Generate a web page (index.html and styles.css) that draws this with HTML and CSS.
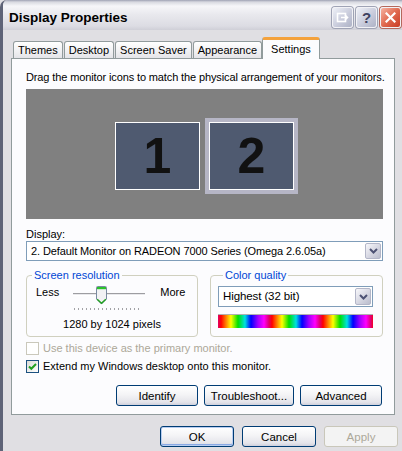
FILE: index.html
```html
<!DOCTYPE html>
<html>
<head>
<meta charset="utf-8">
<link rel="stylesheet" href="styles.css">
</head>
<body>
<div class="window">
  <div class="titlebar">
    <span class="title">Display Properties</span>
    <div class="tbtns">
      <div class="tbtn">
        <svg width="13" height="11" viewBox="0 0 13 11">
          <rect x="1.5" y="1.5" width="8" height="8" fill="none" stroke="#ffffff" stroke-width="1.6"/>
          <path d="M5 5.5 H11.5 M9 3 L11.5 5.5 L9 8" fill="none" stroke="#ffffff" stroke-width="1.6"/>
        </svg>
      </div>
      <div class="tbtn help">?</div>
      <div class="tbtn close">
        <svg width="11" height="11" viewBox="0 0 11 11">
          <path d="M1.5 1.5 L9.5 9.5 M9.5 1.5 L1.5 9.5" stroke="#ffffff" stroke-width="2.2" stroke-linecap="square"/>
        </svg>
      </div>
    </div>
  </div>
  <div class="client">
    <div class="tabs">
      <div class="tab">Themes</div>
      <div class="tab">Desktop</div>
      <div class="tab">Screen Saver</div>
      <div class="tab">Appearance</div>
      <div class="tab active">Settings</div>
    </div>
    <div class="panel">
      <div class="intro">Drag the monitor icons to match the physical arrangement of your monitors.</div>
      <div class="monitors">
        <div class="monitor"><div class="screen">1</div></div>
        <div class="monitor selected"><div class="screen">2</div></div>
      </div>
      <div class="label">Display:</div>
      <div class="select">
        <div class="val">2. Default Monitor on RADEON 7000 Series (Omega 2.6.05a)</div>
        <div class="arrow"><svg width="9" height="6" viewBox="0 0 9 6"><path d="M1 1 L4.5 4.5 L8 1" fill="none" stroke="#4d5274" stroke-width="2"/></svg></div>
      </div>
      <div class="groups">
        <fieldset class="group res">
          <legend>Screen resolution</legend>
          <div class="slider-row">
            <span class="less">Less</span>
            <div class="slider">
              <div class="track"></div>
              <div class="thumb">
                <svg width="11" height="19" viewBox="0 0 11 19">
                  <path d="M0.5 1.5 Q0.5 0.5 1.5 0.5 H9.5 Q10.5 0.5 10.5 1.5 V13 L5.5 18 L0.5 13 Z" fill="#f2f2f4" stroke="#7a8aa0"/>
                  <rect x="1" y="1" width="9" height="2.2" fill="#2cc22c"/>
                  <path d="M1.2 13.2 L5.5 17.2 L9.8 13.2" fill="none" stroke="#21a121" stroke-width="1.4"/>
                </svg>
              </div>
              <div class="ticks"></div>
            </div>
            <span class="more">More</span>
          </div>
          <div class="resval">1280 by 1024 pixels</div>
        </fieldset>
        <fieldset class="group color">
          <legend>Color quality</legend>
          <div class="select small">
            <div class="val">Highest (32 bit)</div>
            <div class="arrow"><svg width="9" height="6" viewBox="0 0 9 6"><path d="M1 1 L4.5 4.5 L8 1" fill="none" stroke="#4d5274" stroke-width="2"/></svg></div>
          </div>
          <div class="spectrum"></div>
        </fieldset>
      </div>
      <div class="checkrow disabled"><span class="check"></span><span>Use this device as the primary monitor.</span></div>
      <div class="checkrow"><span class="check on"><svg width="11" height="11" viewBox="0 0 11 11"><path d="M2 5.5 L4.3 7.8 L9 3" fill="none" stroke="#21a121" stroke-width="2"/></svg></span><span>Extend my Windows desktop onto this monitor.</span></div>
      <div class="panel-buttons">
        <button class="btn w82">Identify</button>
        <button class="btn w90">Troubleshoot...</button>
        <button class="btn w82">Advanced</button>
      </div>
    </div>
    <div class="footer">
      <button class="btn w74 default">OK</button>
      <button class="btn w74">Cancel</button>
      <button class="btn w74" disabled>Apply</button>
    </div>
  </div>
</div>
</body>
</html>
```

FILE: styles.css
```css
html, body {
  margin: 0;
  padding: 0;
}
body {
  width: 402px;
  height: 451px;
  overflow: hidden;
  font-family: "Liberation Sans", Arial, sans-serif;
  font-size: 11px;
  color: #000;
  background: #e0dfe3;
}
.window {
  height: 451px;
  box-sizing: border-box;
  border-left: 3px solid #5e6377;
  border-top-left-radius: 7px;
  background: #e0dfe3;
  display: flex;
  flex-direction: column;
}
.titlebar {
  height: 30px;
  flex: none;
  display: flex;
  background: linear-gradient(#9ea2b3 0, #d8d9e0 2px, #f6f6f9 6px, #e8e8ed 15px, #dcdce3 26px, #cfcfd7 30px);
  border-top-left-radius: 5px;
}
.title {
  flex: 1;
  padding: 10px 0 0 6px;
  font-weight: bold;
  font-size: 13.5px;
  line-height: 16px;
  color: #000;
}
.tbtns {
  display: flex;
  gap: 3px;
  margin: 7px 1px 0 0;
  align-self: flex-start;
}
.tbtn {
  width: 21px;
  height: 21px;
  box-sizing: border-box;
  border: 1px solid #f2f2f6;
  border-radius: 3px;
  box-shadow: 0 0 0 1px #9fa3b5;
  background: linear-gradient(135deg, #eef0f7 0%, #c9ccdc 55%, #aeb2c6 100%);
  display: flex;
  align-items: center;
  justify-content: center;
}
.tbtn.help {
  font-weight: bold;
  font-size: 15px;
  color: #3e4260;
  line-height: 19px;
}
.tbtn.close {
  background: linear-gradient(135deg, #f6b3a2 0%, #e06a50 50%, #c93b25 100%);
  box-shadow: 0 0 0 1px #b4685c;
}
.client {
  flex: 1;
  padding: 7px 0 0 8px;
  display: flex;
  flex-direction: column;
}
.tabs {
  display: flex;
  align-items: flex-end;
  gap: 1px;
  height: 21px;
  padding-left: 2px;
  position: relative;
  z-index: 1;
}
.tab {
  height: 17px;
  box-sizing: border-box;
  padding: 2px 4px 0;
  border: 1px solid #919b9c;
  border-bottom: none;
  border-radius: 3px 3px 0 0;
  background: linear-gradient(#ffffff, #f0f0f2 60%, #e4e4e8);
  line-height: 13px;
}
.tab.active {
  height: 22px;
  margin: 0 -2px -1px -1px;
  padding: 3px 8px 0;
  border-top: 3px solid #f4a23c;
  background: #fcfcfe;
  line-height: 13px;
}
.panel {
  width: 384px;
  box-sizing: border-box;
  border: 1px solid #919b9c;
  background: #fcfcfe;
  padding: 12px 11px 8px 14px;
}
.intro {
  line-height: 13px;
  white-space: nowrap;
  letter-spacing: -0.12px;
}
.monitors {
  margin-top: 5px;
  height: 130px;
  box-sizing: border-box;
  padding-top: 4px;
  background: #808080;
  display: flex;
  align-items: center;
  justify-content: center;
  gap: 1px;
}
.monitor {
  width: 93px;
  height: 76px;
  box-sizing: border-box;
  border: 4px solid transparent;
  display: flex;
}
.monitor.selected {
  border-color: #b6b6c6;
}
.screen {
  flex: 1;
  border: 1px solid #ffffff;
  background: #4f5a70;
  display: flex;
  align-items: center;
  justify-content: center;
  font-weight: bold;
  font-size: 50px;
  color: #111111;
}
.label {
  margin-top: 9px;
  line-height: 13px;
}
.select {
  height: 20px;
  box-sizing: border-box;
  border: 1px solid #7f9db9;
  background: #ffffff;
  padding: 1px;
  display: flex;
}
.select .val {
  flex: 1;
  padding-left: 3px;
  line-height: 16px;
  white-space: nowrap;
  font-size: 11px;
  letter-spacing: -0.1px;
}
.arrow {
  width: 16px;
  box-sizing: border-box;
  border: 1px solid #b3b6c8;
  border-radius: 2px;
  background: linear-gradient(135deg, #f8f8fb, #d2d3df 60%, #babdcd);
  display: flex;
  align-items: center;
  justify-content: center;
}
.groups {
  margin-top: 8px;
  display: flex;
  gap: 12px;
}
.group {
  margin: 0;
  padding: 0;
  border: 1px solid #d0d0bf;
  border-radius: 4px;
  min-width: 0;
}
.group legend {
  color: #0046d5;
  padding: 0 2px;
  margin-left: 5px;
  line-height: 13px;
}
.group.res {
  width: 172px;
  box-sizing: border-box;
  padding: 4px 0 5px;
}
.group.color {
  width: 173px;
  box-sizing: border-box;
  padding: 4px 9px 0 7px;
}
.slider-row {
  display: flex;
  height: 26px;
  padding-left: 9px;
}
.less, .more {
  line-height: 13px;
}
.slider {
  position: relative;
  width: 72px;
  height: 26px;
  margin-left: 14px;
}
.more {
  margin-left: 15px;
}
.track {
  position: absolute;
  left: 0;
  right: 0;
  top: 7px;
  height: 3px;
  box-sizing: border-box;
  border-top: 1px solid #9d9da1;
  border-bottom: 1px solid #ffffff;
  background: #e8e8ec;
}
.thumb {
  position: absolute;
  left: 23px;
  top: 0;
  height: 19px;
}
.thumb svg {
  display: block;
}
.ticks {
  position: absolute;
  left: 1px;
  width: 67px;
  top: 22px;
  height: 2px;
  background: repeating-linear-gradient(90deg, #a2a2a6 0 1px, transparent 1px 4px);
}
.resval {
  margin-top: 6px;
  text-align: center;
  line-height: 13px;
}
.select.small {
  height: 21px;
}
.select.small .val {
  line-height: 17px;
  font-size: 11.5px;
}
.spectrum {
  margin-top: 7px;
  height: 14px;
  border-top: 1px solid #b0b0b0;
  box-sizing: border-box;
  background: repeating-linear-gradient(90deg, #e0006a 0px, #ff0000 3px, #ff8000 8px, #ffff00 13px, #00e000 20px, #00e0e0 27px, #0000ff 33px, #a000ff 40px, #ff00ff 46px, #e0006a 51px);
}
.checkrow {
  display: flex;
  align-items: center;
  gap: 4px;
  height: 18px;
  line-height: 13px;
}
.groups + .checkrow {
  margin-top: 2px;
}
.check {
  width: 13px;
  height: 13px;
  box-sizing: border-box;
  border: 1px solid #1c5180;
  background: linear-gradient(135deg, #dcdcd7, #ffffff);
  display: flex;
  align-items: center;
  justify-content: center;
}
.checkrow.disabled {
  color: #aca899;
}
.checkrow.disabled .check {
  border-color: #cac8bb;
  background: #ffffff;
}
.panel-buttons {
  margin-top: 10px;
  display: flex;
  justify-content: flex-end;
  gap: 6px;
  padding-right: 1px;
}
.btn {
  height: 21px;
  box-sizing: border-box;
  margin: 0;
  padding: 0;
  border: 1px solid #003c74;
  border-radius: 3px;
  background: linear-gradient(#ffffff 0%, #f4f4f6 45%, #e4e4ea 85%, #cfd0dc 100%);
  font-family: "Liberation Sans", Arial, sans-serif;
  font-size: 11.5px;
  color: #000;
}
.w82 { width: 82px; }
.w90 { width: 90px; }
.w74 { width: 74px; }
.btn.default {
  box-shadow: inset 0 0 0 1px #b8cdf0, inset 0 -1px 0 1px #8aa9e4;
}
.btn:disabled {
  border-color: #c9c7ba;
  background: #f3f3f3;
  color: #aca899;
}
.footer {
  margin-top: 11px;
  display: flex;
  justify-content: flex-end;
  gap: 8px;
  padding-right: 4px;
}
```
